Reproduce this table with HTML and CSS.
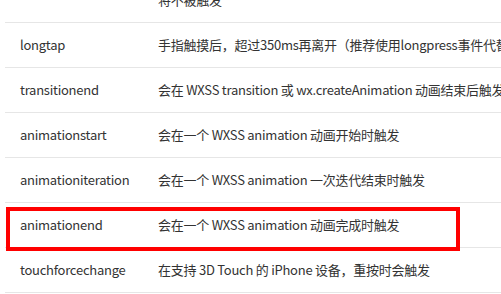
FILE: index.html
```html
<!DOCTYPE html>
<html lang="zh-CN">
<head>
<meta charset="utf-8">
<link rel="stylesheet" href="styles.css">
</head>
<body>
<div class="page">
  <table class="events">
    <colgroup><col class="c-name"><col class="c-desc"></colgroup>
    <tbody>
      <tr><td>longpress</td><td>手指触摸后，超过350ms再离开，如果指定了事件回调函数并触发了这个事件，tap事件<br>将不被触发</td></tr>
      <tr><td>longtap</td><td>手指触摸后，超过350ms再离开（推荐使用longpress事件代替）</td></tr>
      <tr><td>transitionend</td><td>会在 WXSS transition 或 wx.createAnimation 动画结束后触发</td></tr>
      <tr><td>animationstart</td><td>会在一个 WXSS animation 动画开始时触发</td></tr>
      <tr><td>animationiteration</td><td>会在一个 WXSS animation 一次迭代结束时触发</td></tr>
      <tr><td>animationend</td><td>会在一个 WXSS animation 动画完成时触发</td></tr>
      <tr><td>touchforcechange</td><td>在支持 3D Touch 的 iPhone 设备，重按时会触发</td></tr>
    </tbody>
  </table>
  <div class="highlight"></div>
</div>
</body>
</html>
```

FILE: styles.css
```css
html, body {
  margin: 0;
  padding: 0;
  background: #fff;
  overflow: hidden;
}
.page {
  position: relative;
  display: flow-root;
  padding-left: 5px;
  font-family: "Noto Sans CJK SC", "Noto Sans", sans-serif;
  font-size: 13px;
  line-height: 22px;
  letter-spacing: -0.25px;
  color: #333;
}
.events {
  margin-top: -44px;
  border-collapse: collapse;
  table-layout: fixed;
  width: 760px;
}
.c-name { width: 138px; }
.events td {
  padding: 11px 15px;
  border-bottom: 1px solid #e6e6e6;
  white-space: nowrap;
  vertical-align: middle;
}
.highlight {
  position: absolute;
  left: 6px;
  top: 207px;
  width: 446px;
  height: 36px;
  border: 4px solid #ff0000;
}
```
